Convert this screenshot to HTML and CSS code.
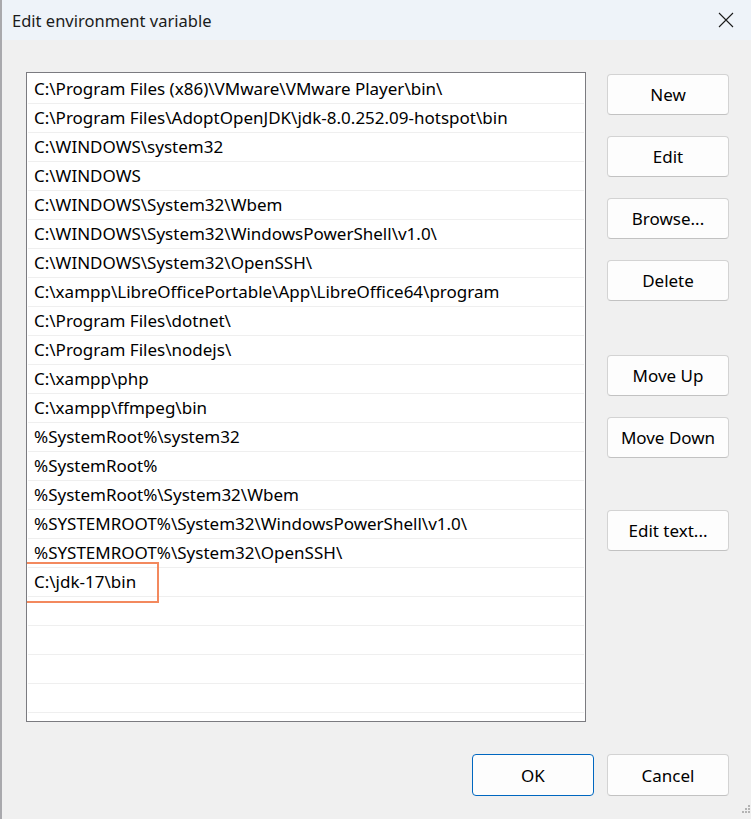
FILE: index.html
```html
<!DOCTYPE html>
<html lang="en">
<head>
    <meta charset="UTF-8">
    <meta name="viewport" content="width=device-width, initial-scale=1.0">
    <title>Edit environment variable</title>
    <link rel="stylesheet" href="styles.css">
</head>
<body>
    <div class="window">
        <!-- Title bar -->
        <div class="titlebar">
            <span class="title">Edit environment variable</span>
            <button class="close" aria-label="Close">
                <svg width="16" height="16" viewBox="0 0 16 16">
                    <path d="M1 1 L15 15 M15 1 L1 15" stroke="#1b1b1b" stroke-width="1.1" fill="none"/>
                </svg>
            </button>
        </div>

        <div class="content">
            <!-- Path entries -->
            <div class="list-box">
                <ul class="path-list">
                    <li>C:\Program Files (x86)\VMware\VMware Player\bin\</li>
                    <li>C:\Program Files\AdoptOpenJDK\jdk-8.0.252.09-hotspot\bin</li>
                    <li>C:\WINDOWS\system32</li>
                    <li>C:\WINDOWS</li>
                    <li>C:\WINDOWS\System32\Wbem</li>
                    <li>C:\WINDOWS\System32\WindowsPowerShell\v1.0\</li>
                    <li>C:\WINDOWS\System32\OpenSSH\</li>
                    <li>C:\xampp\LibreOfficePortable\App\LibreOffice64\program</li>
                    <li>C:\Program Files\dotnet\</li>
                    <li>C:\Program Files\nodejs\</li>
                    <li>C:\xampp\php</li>
                    <li>C:\xampp\ffmpeg\bin</li>
                    <li>%SystemRoot%\system32</li>
                    <li>%SystemRoot%</li>
                    <li>%SystemRoot%\System32\Wbem</li>
                    <li>%SYSTEMROOT%\System32\WindowsPowerShell\v1.0\</li>
                    <li>%SYSTEMROOT%\System32\OpenSSH\</li>
                    <li>C:\jdk-17\bin</li>
                    <li></li>
                    <li></li>
                    <li></li>
                    <li></li>
                    <li></li>
                </ul>
                <!-- annotation around the new entry -->
                <div class="mark"></div>
            </div>

            <!-- Side actions -->
            <div class="actions">
                <button class="btn">New</button>
                <button class="btn">Edit</button>
                <button class="btn">Browse...</button>
                <button class="btn">Delete</button>
                <button class="btn group-start">Move Up</button>
                <button class="btn">Move Down</button>
                <button class="btn text-start">Edit text...</button>
            </div>
        </div>

        <div class="footer">
            <button class="btn btn-default">OK</button>
            <button class="btn">Cancel</button>
        </div>

        <svg class="grip" width="12" height="12" viewBox="0 0 12 12">
            <rect x="9" y="0" width="2" height="2" fill="#b4b4b4"/>
            <rect x="6" y="3" width="2" height="2" fill="#b4b4b4"/>
            <rect x="9" y="3" width="2" height="2" fill="#b4b4b4"/>
            <rect x="3" y="6" width="2" height="2" fill="#b4b4b4"/>
            <rect x="6" y="6" width="2" height="2" fill="#b4b4b4"/>
            <rect x="9" y="6" width="2" height="2" fill="#b4b4b4"/>
        </svg>
    </div>
</body>
</html>
```

FILE: styles.css
```css
body {
    margin: 0;
    padding: 0;
    font-family: "Segoe UI", "Noto Sans", sans-serif;
    font-size: 17px;
    color: #000;
    background: #f0f0f0;
}

.window {
    position: relative;
    width: 751px;
    height: 819px;
    box-sizing: border-box;
    border-left: 2px solid #a9a9ad;
    background: #f0f0f0;
    overflow: hidden;
}

/* Title bar */
.titlebar {
    height: 40px;
    display: flex;
    align-items: center;
    justify-content: space-between;
    background: #eef3f9;
    padding-left: 10px;
}

.title {
    font-size: 16.5px;
    color: #1b1b1b;
}

.close {
    width: 46px;
    height: 40px;
    border: none;
    background: transparent;
    display: flex;
    align-items: center;
    justify-content: center;
    padding: 0;
    margin-right: 2px;
}

/* Main area */
.content {
    display: flex;
    gap: 21px;
    padding: 32px 0 0 24px;
}

.list-box {
    position: relative;
    width: 558px;
    height: 648px;
    border: 1px solid #7b7b80;
    background: #fff;
    overflow: hidden;
}

.path-list {
    list-style: none;
    margin: 0;
    padding: 2px 0 0;
}

.path-list li {
    height: 28px;
    line-height: 28px;
    margin: 0 1px;
    padding-left: 6px;
    border-bottom: 1px solid #efefef;
    white-space: nowrap;
}

.mark {
    position: absolute;
    left: -3px;
    top: 489px;
    width: 131px;
    height: 37px;
    border: 2px solid #f3895e;
}

.actions {
    display: flex;
    flex-direction: column;
    gap: 21px;
    padding-top: 2px;
}

.btn {
    width: 122px;
    height: 41px;
    box-sizing: border-box;
    background: #fdfdfd;
    border: 1px solid #d3d3d3;
    border-bottom-color: #c2c2c2;
    border-radius: 4px;
    font-family: inherit;
    font-size: 17px;
    color: #000;
    padding: 0;
}

.group-start {
    margin-top: 33px;
}

.text-start {
    margin-top: 31px;
}

/* Bottom buttons */
.footer {
    display: flex;
    justify-content: flex-end;
    gap: 13px;
    padding: 32px 22px 0 0;
}

.footer .btn {
    height: 42px;
}

.btn-default {
    border: 1px solid #0067c0;
}

.grip {
    position: absolute;
    right: 0;
    bottom: 2px;
}
```
